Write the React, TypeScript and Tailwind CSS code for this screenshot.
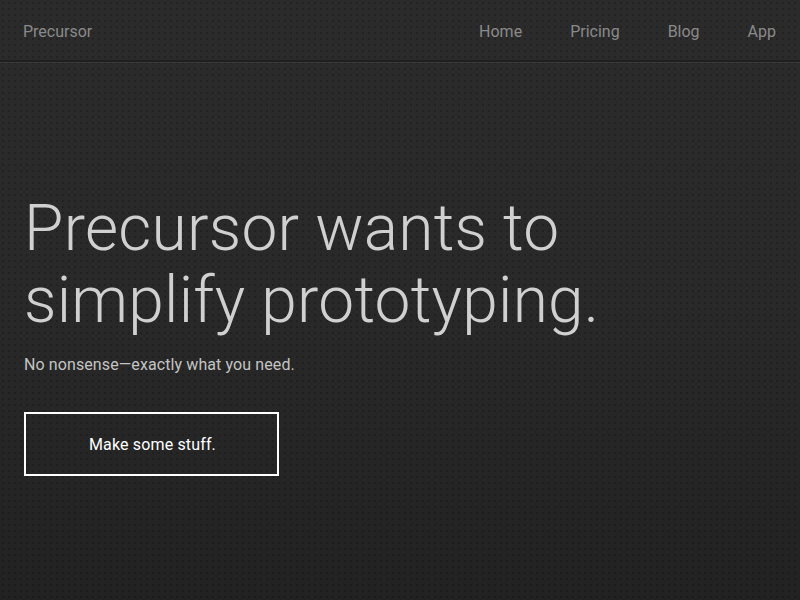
const links = ['Home', 'Pricing', 'Blog', 'App']

export default function App() {
  return (
    <div
      className="relative min-h-[600px] w-full bg-gradient-to-b from-[#2b2b2b] via-[#292929] to-[#222222] text-[#ccc]"
      style={{ fontFamily: 'Roboto, "Liberation Sans", sans-serif' }}
    >
      {/* dot texture */}
      <div className="absolute inset-0 bg-[radial-gradient(circle,rgba(0,0,0,0.2)_0.7px,transparent_1px)] bg-[length:6px_6px] pointer-events-none" />

      <div className="relative">
        <header className="h-[63px] flex items-center justify-between pl-[23px] pr-6 border-b border-[#3a3a3a] shadow-[inset_0_-2px_0_#1f1f1f]">
          <a className="text-base text-[#8a8a8a] pt-[2px]">Precursor</a>
          <nav className="flex items-center gap-12 pt-[2px]">
            {links.map(l => (
              <a key={l} className="text-base text-[#8a8a8a]">{l}</a>
            ))}
          </nav>
        </header>

        <main className="px-6 pt-[130px] pb-[124px]">
          <h1 className="text-[64px] leading-[72px] font-light text-[#d0d0d0] tracking-[0.25px]">
            Precursor wants to
            <br />
            simplify prototyping.
          </h1>
          <p className="mt-[16px] text-base text-[#c4c4c4] tracking-[0.1px]">No nonsense—exactly what you need.</p>
          <button className="mt-[35px] w-[255px] h-[64px] border-2 border-white pt-[2px] pl-[2px] text-base text-white tracking-[0.15px]">
            Make some stuff.
          </button>
        </main>
      </div>
    </div>
  )
}
